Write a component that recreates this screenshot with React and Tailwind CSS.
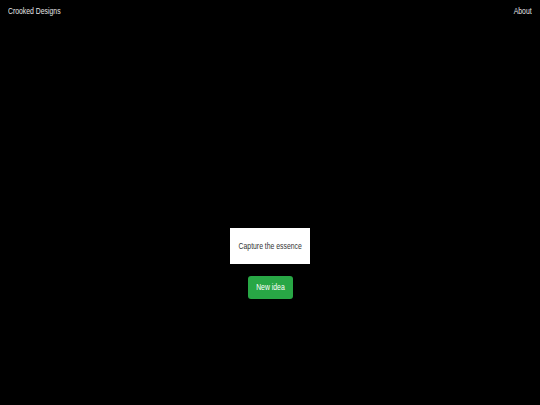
export default function App() {
  return (
    <div className="h-[405px] w-[540px] bg-black overflow-hidden antialiased font-['Liberation_Sans',Arial,sans-serif]">
      <div className="flex justify-between px-2 pt-[5px] text-[9.8px] leading-[12px] text-[#e6e6e6] whitespace-nowrap">
        <span className="inline-block origin-left scale-x-[0.7]">Crooked Designs</span>
        <span className="inline-block origin-right scale-x-[0.7]">About</span>
      </div>
      <div className="flex flex-col items-center pt-[211px] gap-3">
        <div className="w-20 h-9 bg-white flex items-center justify-center text-[9.8px] text-[#333] whitespace-nowrap">
          <span className="inline-block scale-x-[0.7]">Capture the essence</span>
        </div>
        <button className="w-[45px] h-[23px] rounded-[3px] bg-[#28a745] text-white text-[9.8px] flex items-center justify-center whitespace-nowrap">
          <span className="inline-block scale-x-[0.7]">New idea</span>
        </button>
      </div>
    </div>
  );
}
